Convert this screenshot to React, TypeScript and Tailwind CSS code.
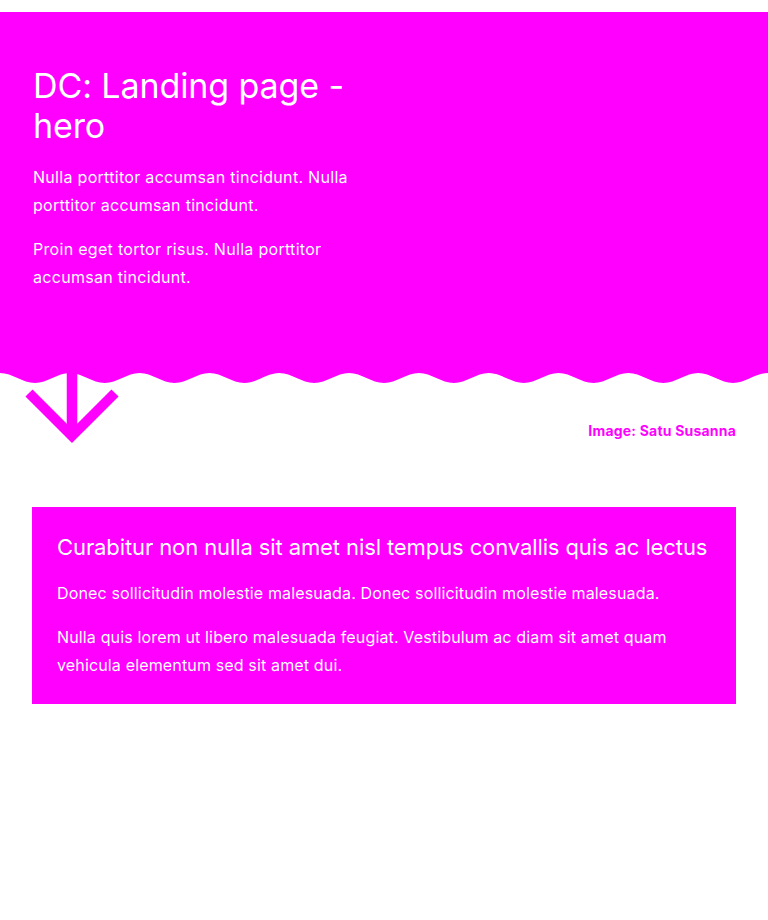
import { FC } from "react";

const MAGENTA = "#ff00ff";

// sine-ish wave along the bottom edge of the hero, 11 periods across 768px
const wavePath = () => {
  const width = 768;
  const periods = 11;
  const half = width / periods / 2;
  const amp = 10;
  let d = `M0 0 L0 0`;
  for (let i = 0; i < periods * 2; i++) {
    const x0 = i * half;
    const y0 = i % 2 === 0 ? 0 : amp;
    const y1 = i % 2 === 0 ? amp : 0;
    d += ` C${(x0 + half * 0.364).toFixed(2)} ${y0} ${(x0 + half * 0.636).toFixed(2)} ${y1} ${(x0 + half).toFixed(2)} ${y1}`;
  }
  d += ` L${width} 0 Z`;
  return d;
};

const Wave: FC = () => (
  <svg
    className="block w-full h-[10px]"
    viewBox="0 0 768 10"
    preserveAspectRatio="none"
  >
    <path d={wavePath()} fill={MAGENTA} />
  </svg>
);

const DownArrow: FC = () => (
  <svg
    className="absolute left-0 top-[-20px]"
    width="140"
    height="100"
    viewBox="0 0 140 100"
    fill="none"
  >
    {/* svg origin sits at page y=353 */}
    <line x1="72" y1="0" x2="72" y2="76" stroke={MAGENTA} strokeWidth="10.5" />
    <polyline
      points="29,40 72,83 115,40"
      stroke={MAGENTA}
      strokeWidth="10"
      strokeLinejoin="miter"
      strokeLinecap="butt"
    />
  </svg>
);

const Hero: FC = () => (
  <section className="bg-[#ff00ff] h-[361px] px-[33px] pt-[54px] text-white">
    <div className="w-[352px]">
      <h1 className="text-[34px] leading-[40px] font-normal tracking-[-0.1px]">
        DC: Landing page - hero
      </h1>
      <p className="mt-[17px] text-[16px] leading-[28px] tracking-[0.3px]">
        Nulla porttitor accumsan tincidunt. Nulla porttitor accumsan tincidunt.
      </p>
      <p className="mt-[16px] text-[16px] leading-[28px] tracking-[0.3px]">
        Proin eget tortor risus. Nulla porttitor accumsan tincidunt.
      </p>
    </div>
  </section>
);

const Card: FC = () => (
  <div className="mx-8 bg-[#ff00ff] pl-[25px] pr-[20px] pt-[24px] pb-[25px] text-white">
    <h2 className="text-[22px] leading-[32px] font-normal tracking-[-0.1px]">
      Curabitur non nulla sit amet nisl tempus convallis quis ac lectus
    </h2>
    <p className="mt-[16px] text-[16px] leading-[28px] tracking-[0.15px]">
      Donec sollicitudin molestie malesuada. Donec sollicitudin molestie malesuada.
    </p>
    <p className="mt-[16px] text-[16px] leading-[28px] tracking-[0.15px]">
      Nulla quis lorem ut libero malesuada feugiat. Vestibulum ac diam sit amet
      quam vehicula elementum sed sit amet dui.
    </p>
  </div>
);

const App: FC = () => {
  return (
    <div className="min-h-[920px] bg-white pt-3 font-['Inter',sans-serif]">
      <Hero />
      <div className="relative">
        <Wave />
        <DownArrow />
        <div className="flex justify-end px-8 pt-[38px] h-[124px]">
          <span className="text-[14px] leading-[20px] font-bold tracking-[0.2px] text-[#ff00ff]">
            Image: Satu Susanna
          </span>
        </div>
      </div>
      <Card />
    </div>
  );
};

export default App;
